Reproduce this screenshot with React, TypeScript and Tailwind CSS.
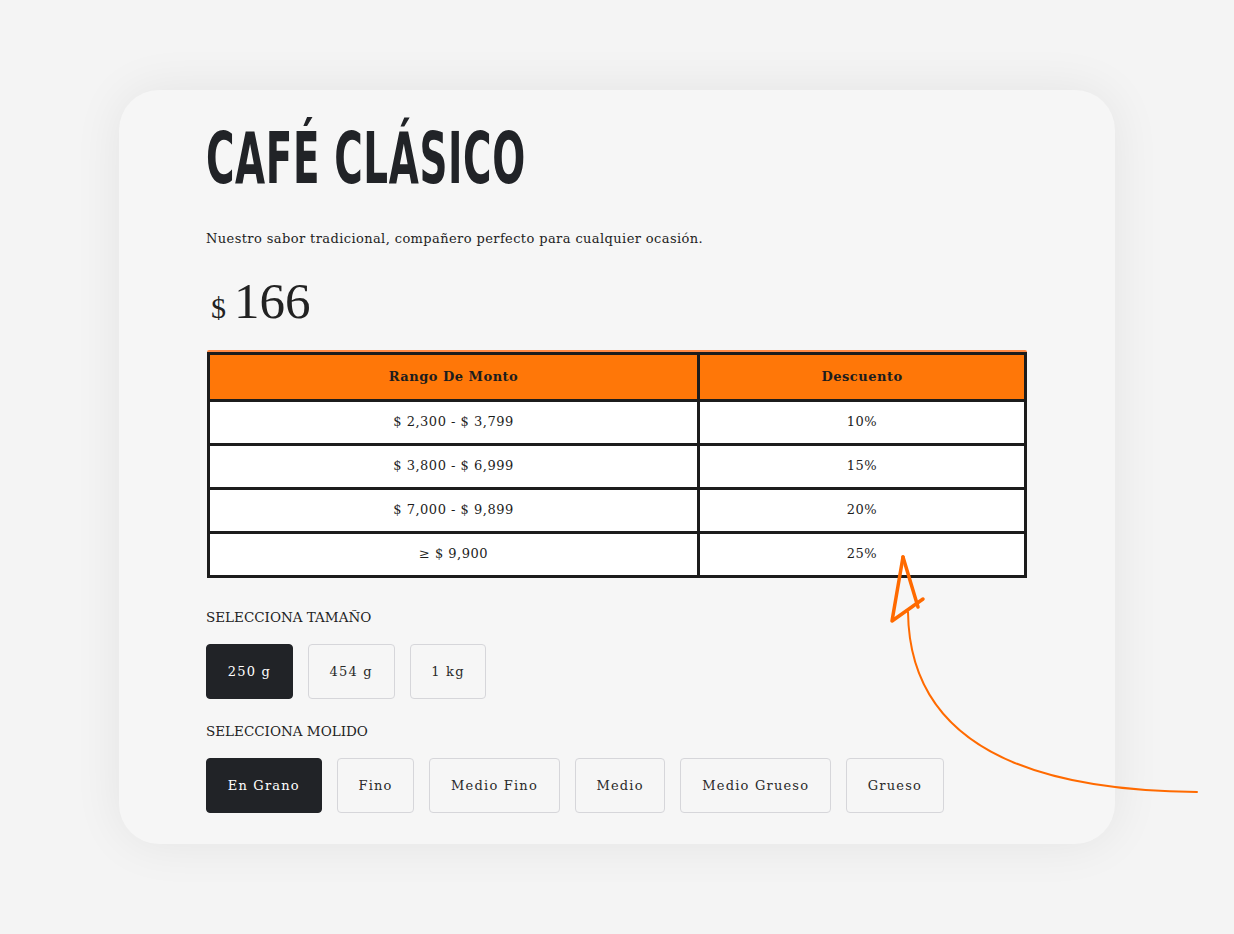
const sizes = ['250 g', '454 g', '1 kg'];
const grinds = ['En Grano', 'Fino', 'Medio Fino', 'Medio', 'Medio Grueso', 'Grueso'];

const tiers = [
  { range: '$ 2,300 - $ 3,799', off: '10%' },
  { range: '$ 3,800 - $ 6,999', off: '15%' },
  { range: '$ 7,000 - $ 9,899', off: '20%' },
  { range: '≥ $ 9,900', off: '25%' },
];

const serif = 'font-["DejaVu_Serif",serif]';

function OptionButton({ label, active }: { label: string; active?: boolean }) {
  return (
    <button
      className={`h-[55px] rounded-[4px] px-[20.75px] text-[13px] tracking-[1.2px] ${serif} ${
        active
          ? 'bg-[#212327] text-white border border-[#212327]'
          : 'bg-[#f6f6f6] text-[#2a2a2a] border-[1.5px] border-[#d6d6da]'
      }`}
    >
      {label}
    </button>
  );
}

function Arrow() {
  return (
    <svg className="absolute inset-0 w-full h-full pointer-events-none" viewBox="0 0 1234 934" fill="none">
      <path d="M1197 792 Q910 790 908 612" stroke="#ff6a00" strokeWidth="2" strokeLinecap="round" />
      <path d="M903 557 L892 621 L923 599" stroke="#ff6a00" strokeWidth="3.5" strokeLinecap="round" strokeLinejoin="round" />
      <path d="M903 557 L918 607" stroke="#ff6a00" strokeWidth="3.5" strokeLinecap="round" />
    </svg>
  );
}

export default function App() {
  return (
    <div className="relative min-h-screen bg-[#f4f4f4] pt-[90px]">
      <div className="mx-auto w-[996px] rounded-[40px] bg-[#f6f6f6] shadow-[0_0_50px_rgba(0,0,0,0.07)] pl-[87px] pt-[32px] pb-[31px]">
        <h1 className='h-[72px] text-[72px] leading-none font-bold text-[#212327] font-["DejaVu_Sans_Condensed","DejaVu_Sans",sans-serif] origin-left scale-x-[0.6] whitespace-nowrap tracking-[1px]'>
          CAFÉ CLÁSICO
        </h1>

        <p className={`mt-[35px] text-[13px] leading-[20px] text-[#222] tracking-[0.4px] ${serif}`}>
          Nuestro sabor tradicional, compañero perfecto para cualquier ocasión.
        </p>

        <div className='mt-[27px] ml-[5px] flex items-baseline gap-[8px] text-[#222] font-["Liberation_Serif",serif] leading-none h-[50px]'>
          <span className="text-[30px]">$</span>
          <span className="text-[51px]">166</span>
        </div>

        <div className="mt-[24px] ml-px w-[820px]">
          <div className="h-[2px] rounded-t-[2px] bg-[#ff8a45]" />
          <div className={`border-[3px] border-[#1c1c1c] text-[13px] text-[#1d1d1d] ${serif}`}>
            <div className="grid grid-cols-[487px_1fr] h-[44px] bg-[#ff7708] font-bold tracking-[0.5px]">
              <div className="flex items-center justify-center">Rango De Monto</div>
              <div className="flex items-center justify-center border-l-[3px] border-[#1c1c1c]">Descuento</div>
            </div>
            {tiers.map((t) => (
              <div key={t.off} className="grid grid-cols-[487px_1fr] h-[44px] border-t-[3px] border-[#1c1c1c] bg-white tracking-[0.5px]">
                <div className="flex items-center justify-center pb-[2px]">{t.range}</div>
                <div className="flex items-center justify-center pb-[2px] border-l-[3px] border-[#1c1c1c]">{t.off}</div>
              </div>
            ))}
          </div>
        </div>

        <p className={`mt-[29px] text-[13.5px] leading-[20px] text-[#222] ${serif}`}>SELECCIONA TAMAÑO</p>
        <div className="mt-[17px] flex gap-[15px]">
          {sizes.map((s, i) => (
            <OptionButton key={s} label={s} active={i === 0} />
          ))}
        </div>

        <p className={`mt-[22px] text-[13.5px] leading-[20px] text-[#222] ${serif}`}>SELECCIONA MOLIDO</p>
        <div className="mt-[17px] flex gap-[15px]">
          {grinds.map((g, i) => (
            <OptionButton key={g} label={g} active={i === 0} />
          ))}
        </div>
      </div>
      <Arrow />
    </div>
  );
}
